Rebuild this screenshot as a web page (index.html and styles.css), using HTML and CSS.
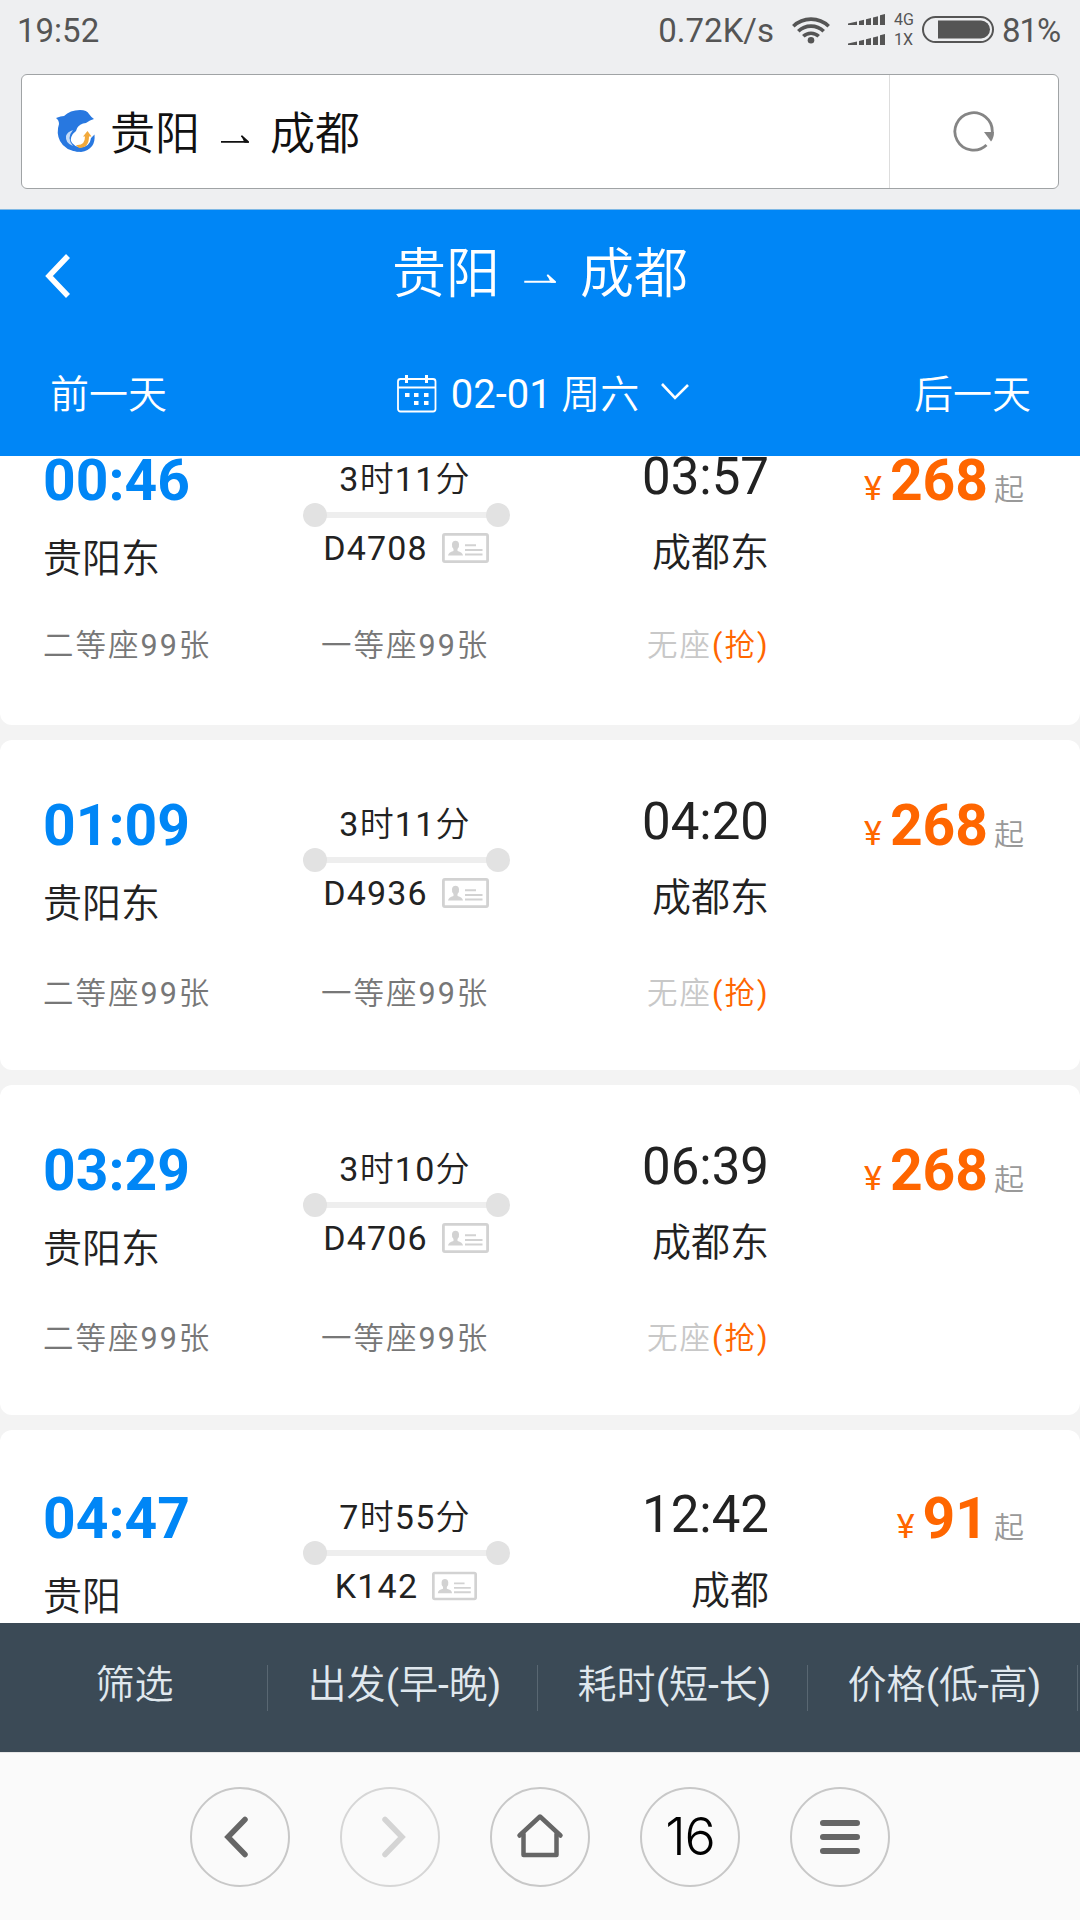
FILE: index.html
```html
<!DOCTYPE html>
<html lang="zh-CN">
<head>
    <meta charset="UTF-8">
    <meta name="viewport" content="width=device-width, initial-scale=1.0">
    <title>贵阳 - 成都</title>
    <link rel="stylesheet" href="styles.css">
</head>
<body>
    <svg class="sprite" width="0" height="0">
        <symbol id="arrow" viewBox="0 0 28 8">
            <path d="M0 6.8H27L20.5 0.8" fill="none" stroke="currentColor" stroke-width="1.8"/>
            <path d="M20 0L28 7.7H23.5Z" fill="currentColor"/>
        </symbol>
        <symbol id="idcard" viewBox="0 0 47 30">
            <rect x="1.4" y="1.4" width="44.2" height="27.2" rx="1.5" fill="#fff" stroke="#d2d2d2" stroke-width="2.8"/>
            <path d="M6 22.5q.5-3.5 5.5-4.500v-2q-2-2-1.500-5 .5-3.200 3.500-3.200t3.500 3.200q.5 3-1.500 5v2q5 1 5.500 4.500z" fill="#d2d2d2"/>
            <path d="M23 12.300h11M23 17h17.500M23 21.500h17.500" stroke="#d2d2d2" stroke-width="2"/>
        </symbol>
    </svg>

    <div class="status-bar">
        <span class="clock">19:52</span>
        <span class="speed">0.72K/s</span>
        <svg class="wifi" width="38" height="28" viewBox="0 0 38 28">
            <g fill="none" stroke="#555" stroke-width="3.6">
                <path d="M1.3 10.3a25.5 25.5 0 0 1 35.4 0"/>
                <path d="M6.3 15.3a18.2 18.2 0 0 1 25.4 0"/>
                <path d="M11.3 20.3a11.2 11.2 0 0 1 15.4 0"/>
            </g>
            <circle cx="19" cy="24.3" r="3.3" fill="#555"/>
        </svg>
        <svg class="signal" width="38" height="32" viewBox="0 0 38 32" fill="#555">
            <path id="bars" d="M0 9.5L9 7.5V11H0zM11 7l5-1.300V11h-5zM18 5.200l5-1.200V11h-5zM25 3.400l5-1.200V11h-5zM32 1.300L37 0V11h-5z"/>
            <use href="#bars" y="20"/>
        </svg>
        <div class="network"><span>4G</span><span>1X</span></div>
        <svg class="battery" width="72" height="28" viewBox="0 0 72 28">
            <rect x="1" y="1" width="70" height="25" rx="12.5" fill="none" stroke="#555" stroke-width="2"/>
            <path d="M16 4.500H59a9 9 0 0 1 0 18H16z" fill="#555"/>
        </svg>
        <span class="percent">81%</span>
    </div>

    <div class="address-bar">
        <div class="address">
            <svg class="favicon" width="40" height="42" viewBox="0 0 40 42">
                <path d="M0 8Q5 6 8 6 14 0 24 0q7 0 9 4 2 3 5 5l-4 1.500Q31 13 27 13.500q-6 2-7 7.500Q13 26 15 35q3 5 9 7Q9 41 4 31 0 23 3 14 3 10 0 8z" fill="#2878e0"/>
                <path d="M38.500 24.500q1.500 15-13.500 17.500-10 0-14-8l2-10q1 12 11 13.500Q34 37 35 28z" fill="#2878e0"/>
                <path d="M17 20q-7 8 0 16-8-3-7-10 1-4 7-6z" fill="#c5dbf7"/>
                <path d="M20 35q9 1 9-8.500h-2l4.500-5.500 4 5.500h-2.500Q33 38 23 38z" fill="#f2a93b"/>
            </svg>
            <span>贵阳</span>
            <svg class="arrow" width="28" height="8"><use href="#arrow"/></svg>
            <span>成都</span>
        </div>
        <div class="reload">
            <svg width="42" height="42" viewBox="0 0 42 42">
                <path d="M33.500 34A18.700 18.700 0 1 1 39.300 21" fill="none" stroke="#858585" stroke-width="2.8"/>
                <path d="M31 21h10q0 6-3 9.500z" fill="#858585"/>
            </svg>
        </div>
    </div>

    <div class="header">
        <div class="title-row">
            <svg class="back" width="26" height="44" viewBox="0 0 26 44"><path d="M23 2L4 22 23 42" fill="none" stroke="#fff" stroke-width="5.5"/></svg>
            <div class="title">
                <span>贵阳</span>
                <svg class="arrow" width="32" height="9"><use href="#arrow"/></svg>
                <span>成都</span>
            </div>
        </div>
        <div class="date-row">
            <span class="prev">前一天</span>
            <div class="date">
                <svg class="calendar" width="40" height="38" viewBox="0 0 40 38" fill="none" stroke="#fff" stroke-width="1.8">
                    <rect x="1" y="4" width="37.5" height="32.5" rx="2.5"/>
                    <path d="M1 12.500H38.500"/>
                    <path d="M9.500 0V8M29.500 0V8" stroke-width="3"/>
                    <path d="M8 20h4.500M17 20h4.500M27 20h4.500M17 28h4.500M27 28h4.500" stroke-width="4.2"/>
                </svg>
                <span class="day"><span class="num">02-01</span> 周六</span>
                <svg class="down" width="28" height="18" viewBox="0 0 28 18"><path d="M1 1L14 15 27 2" fill="none" stroke="#fff" stroke-width="2.6"/></svg>
            </div>
            <span class="next">后一天</span>
        </div>
    </div>

    <div class="list">
        <div class="card card-first">
            <div class="trip">
                <div class="depart"><div class="time">00:46</div><div class="station">贵阳东</div></div>
                <div class="train">
                    <div class="duration"><span class="num">3</span>时<span class="num">11</span>分</div>
                    <div class="line"></div>
                    <div class="code">D4708<svg width="47" height="30"><use href="#idcard"/></svg></div>
                </div>
                <div class="arrive"><div class="time">03:57</div><div class="station">成都东</div></div>
                <div class="price"><i>¥</i><b>268</b><span>起</span></div>
            </div>
            <div class="seats">
                <div>二等座<span class="num">99</span>张</div>
                <div>一等座<span class="num">99</span>张</div>
                <div class="none">无座<em><span class="num">(</span>抢<span class="num">)</span></em></div>
            </div>
        </div>

        <div class="card">
            <div class="trip">
                <div class="depart"><div class="time">01:09</div><div class="station">贵阳东</div></div>
                <div class="train">
                    <div class="duration"><span class="num">3</span>时<span class="num">11</span>分</div>
                    <div class="line"></div>
                    <div class="code">D4936<svg width="47" height="30"><use href="#idcard"/></svg></div>
                </div>
                <div class="arrive"><div class="time">04:20</div><div class="station">成都东</div></div>
                <div class="price"><i>¥</i><b>268</b><span>起</span></div>
            </div>
            <div class="seats">
                <div>二等座<span class="num">99</span>张</div>
                <div>一等座<span class="num">99</span>张</div>
                <div class="none">无座<em><span class="num">(</span>抢<span class="num">)</span></em></div>
            </div>
        </div>

        <div class="card">
            <div class="trip">
                <div class="depart"><div class="time">03:29</div><div class="station">贵阳东</div></div>
                <div class="train">
                    <div class="duration"><span class="num">3</span>时<span class="num">10</span>分</div>
                    <div class="line"></div>
                    <div class="code">D4706<svg width="47" height="30"><use href="#idcard"/></svg></div>
                </div>
                <div class="arrive"><div class="time">06:39</div><div class="station">成都东</div></div>
                <div class="price"><i>¥</i><b>268</b><span>起</span></div>
            </div>
            <div class="seats">
                <div>二等座<span class="num">99</span>张</div>
                <div>一等座<span class="num">99</span>张</div>
                <div class="none">无座<em><span class="num">(</span>抢<span class="num">)</span></em></div>
            </div>
        </div>

        <div class="card card-last">
            <div class="trip">
                <div class="depart"><div class="time">04:47</div><div class="station">贵阳</div></div>
                <div class="train">
                    <div class="duration"><span class="num">7</span>时<span class="num">55</span>分</div>
                    <div class="line"></div>
                    <div class="code">K142<svg width="45" height="30"><use href="#idcard"/></svg></div>
                </div>
                <div class="arrive"><div class="time">12:42</div><div class="station">成都</div></div>
                <div class="price"><i>¥</i><b>91</b><span>起</span></div>
            </div>
        </div>
    </div>

    <div class="filter-bar">
        <div>筛选</div>
        <div>出发<span class="num">(</span>早<span class="num">-</span>晚<span class="num">)</span></div>
        <div>耗时<span class="num">(</span>短<span class="num">-</span>长<span class="num">)</span></div>
        <div>价格<span class="num">(</span>低<span class="num">-</span>高<span class="num">)</span></div>
    </div>

    <div class="nav">
        <div class="nav-btn">
            <svg width="100" height="100" viewBox="0 0 100 100"><path d="M55 32.500L38 50l17 17.500" fill="none" stroke="#666" stroke-width="5.5" stroke-linecap="round"/></svg>
        </div>
        <div class="nav-btn disabled">
            <svg width="100" height="100" viewBox="0 0 100 100"><path d="M45 32.500L62 50 45 67.500" fill="none" stroke="#d4d4d4" stroke-width="5.5" stroke-linecap="round"/></svg>
        </div>
        <div class="nav-btn">
            <svg width="100" height="100" viewBox="0 0 100 100" fill="none" stroke="#666" stroke-width="4.5" stroke-linejoin="round" stroke-linecap="round">
                <path d="M29.500 48.500L50 29.500 70.500 48.500"/>
                <path d="M33.500 47V68H66.500V47"/>
            </svg>
        </div>
        <div class="nav-btn tabs">16</div>
        <div class="nav-btn">
            <svg width="100" height="100" viewBox="0 0 100 100"><path d="M33 36H67M33 50H67M33 64H67" stroke="#666" stroke-width="6" stroke-linecap="round"/></svg>
        </div>
    </div>
</body>
</html>
```
FILE: styles.css
```css
* {
    box-sizing: border-box;
}
body {
    display: flex;
    flex-direction: column;
    width: 1080px;
    height: 1920px;
    margin: 0;
    overflow: hidden;
    background: #eeeff1;
    color: #222;
    font-family: Roboto, "Noto Sans CJK SC", sans-serif;
}
svg {
    display: block;
    flex: none;
}
.sprite {
    position: absolute;
}
/* chinese text is set lighter than the digits next to it */
.num {
    font-weight: 400;
}

/* status bar */
.status-bar {
    display: flex;
    align-items: center;
    height: 60px;
    padding: 0 18px 0 17px;
    color: #555;
    font-size: 33px;
    line-height: 61px;
}
.speed {
    margin-left: auto;
}
.wifi {
    margin: 0 18px 0 18px;
}
.network {
    display: flex;
    flex-direction: column;
    width: 23px;
    margin: 0 5px 0 8px;
    font-size: 16px;
    line-height: 20px;
}
.percent {
    width: 60px;
    margin-left: 8px;
    letter-spacing: -1px;
}

/* browser address bar */
.address-bar {
    display: flex;
    height: 115px;
    margin: 14px 21px 20px;
    border: 1px solid #a0a3a5;
    border-radius: 6px;
    background: #fff;
}
.address {
    display: flex;
    align-items: center;
    width: 867px;
    padding-left: 34px;
    padding-bottom: 2px;
    font-size: 45px;
    font-weight: 350;
    color: #111;
}
.favicon {
    margin-right: 14px;
}
.address .arrow {
    margin: 16px 21px 0 21px;
}
.reload {
    display: flex;
    flex: 1;
    align-items: center;
    justify-content: center;
    border-left: 1px solid #ddd;
}

/* page header */
.header {
    height: 247px;
    background: #0086f6;
    color: #fff;
    border-top: 1px solid #7fb8e4;
    font-weight: 350;
}
.title-row {
    display: flex;
    align-items: center;
    height: 132px;
    padding-left: 45px;
}
.title {
    display: flex;
    flex: 1;
    align-items: center;
    justify-content: center;
    margin-left: -71px;
    padding-bottom: 14px;
    font-size: 54px;
}
.title .arrow {
    margin: 18px 24px 0;
}
.date-row {
    display: flex;
    align-items: center;
    justify-content: space-between;
    height: 98px;
    padding: 0 49px 0 50px;
    font-size: 39px;
}
.date {
    display: flex;
    align-items: center;
    margin-right: -5px;
}
.calendar {
    margin-top: 5px;
}
.day {
    margin: 0 22px 0 14px;
}
.day .num {
    font-size: 40px;
}
.down {
    margin-top: 2px;
}

/* train list */
.list {
    flex: 1;
    overflow: hidden;
    background: #f3f3f3;
}
.card {
    height: 330px;
    margin-bottom: 15px;
    padding: 51px 56px 0 43px;
    border-radius: 12px;
    background: #fff;
}
.card-first {
    margin-top: -61px;
}
.card-last {
    padding-top: 54px;
}
.trip {
    display: grid;
    grid-template-columns: 260px 207px 259px 255px;
    height: 138px;
}
.time {
    line-height: 62px;
}
.depart {
    padding-top: 4px;
}
.depart .time {
    color: #0086f6;
    font-size: 57px;
    font-weight: 700;
}
.station {
    margin-top: 20px;
    font-size: 39px;
    font-weight: 350;
    line-height: 50px;
}
.depart .station {
    margin-top: 22px;
}
.train {
    padding-top: 13px;
    font-size: 34px;
    line-height: 40px;
    letter-spacing: 1.2px;
    text-align: center;
}
.duration {
    padding-right: 3px;
    font-weight: 350;
}
.line {
    display: flex;
    align-items: center;
    justify-content: space-between;
    height: 24px;
    margin: 4px 0 1px;
    background: linear-gradient(#eee, #eee) center / 170px 6px no-repeat;
}
.line:before,
.line:after {
    content: "";
    width: 24px;
    height: 24px;
    border-radius: 50%;
    background: #e2e2e2;
}
.code {
    display: flex;
    align-items: center;
    justify-content: center;
    gap: 14px;
    margin-left: -1px;
}
.arrive {
    text-align: right;
}
.arrive .time {
    font-size: 51px;
}
.price {
    display: flex;
    align-items: baseline;
    justify-content: flex-end;
    padding-top: 4px;
    color: #ff6600;
    line-height: 62px;
}
.price i {
    font-size: 34px;
    font-style: normal;
}
.price b {
    margin: 0 6px 0 8px;
    font-size: 57px;
}
.price span {
    color: #999;
    font-size: 30px;
    font-weight: 350;
}
.seats {
    display: grid;
    grid-template-columns: 278px 326px auto;
    margin-top: 45px;
    color: #777;
    font-size: 30.5px;
    font-weight: 350;
    line-height: 40px;
    letter-spacing: 2px;
}
.card-first .seats {
    margin-top: 42px;
}
.seats .none {
    color: #c8c8c8;
}
.seats em {
    color: #ff6600;
    font-style: normal;
}

/* sort and filter */
.filter-bar {
    display: grid;
    grid-template-columns: repeat(4, 270px);
    align-items: center;
    height: 129px;
    margin-left: -2px;
    padding-left: 0;
    background: #3b4a56;
    box-shadow: 2px 0 #3b4a56;
    color: #e0e8ee;
    font-size: 39px;
    font-weight: 350;
    text-align: center;
}
.filter-bar div {
    height: 46px;
    padding-left: 4px;
    border-right: 1px solid #596772;
    line-height: 40px;
}

/* browser toolbar */
.nav {
    display: flex;
    justify-content: center;
    gap: 50px;
    height: 168px;
    padding-top: 34px;
    border-top: 1px solid #e6e6e6;
    background: #fafafa;
}
.nav-btn {
    display: flex;
    align-items: center;
    justify-content: center;
    width: 100px;
    height: 100px;
    border: 2px solid #c8c8c8;
    border-radius: 50%;
}
.disabled {
    border-color: #d6d6d6;
}
.tabs {
    padding-bottom: 2px;
    color: #000;
    font-family: Inter, Roboto, sans-serif;
    font-size: 52px;
    font-weight: 300;
    letter-spacing: -1px;
}
```
